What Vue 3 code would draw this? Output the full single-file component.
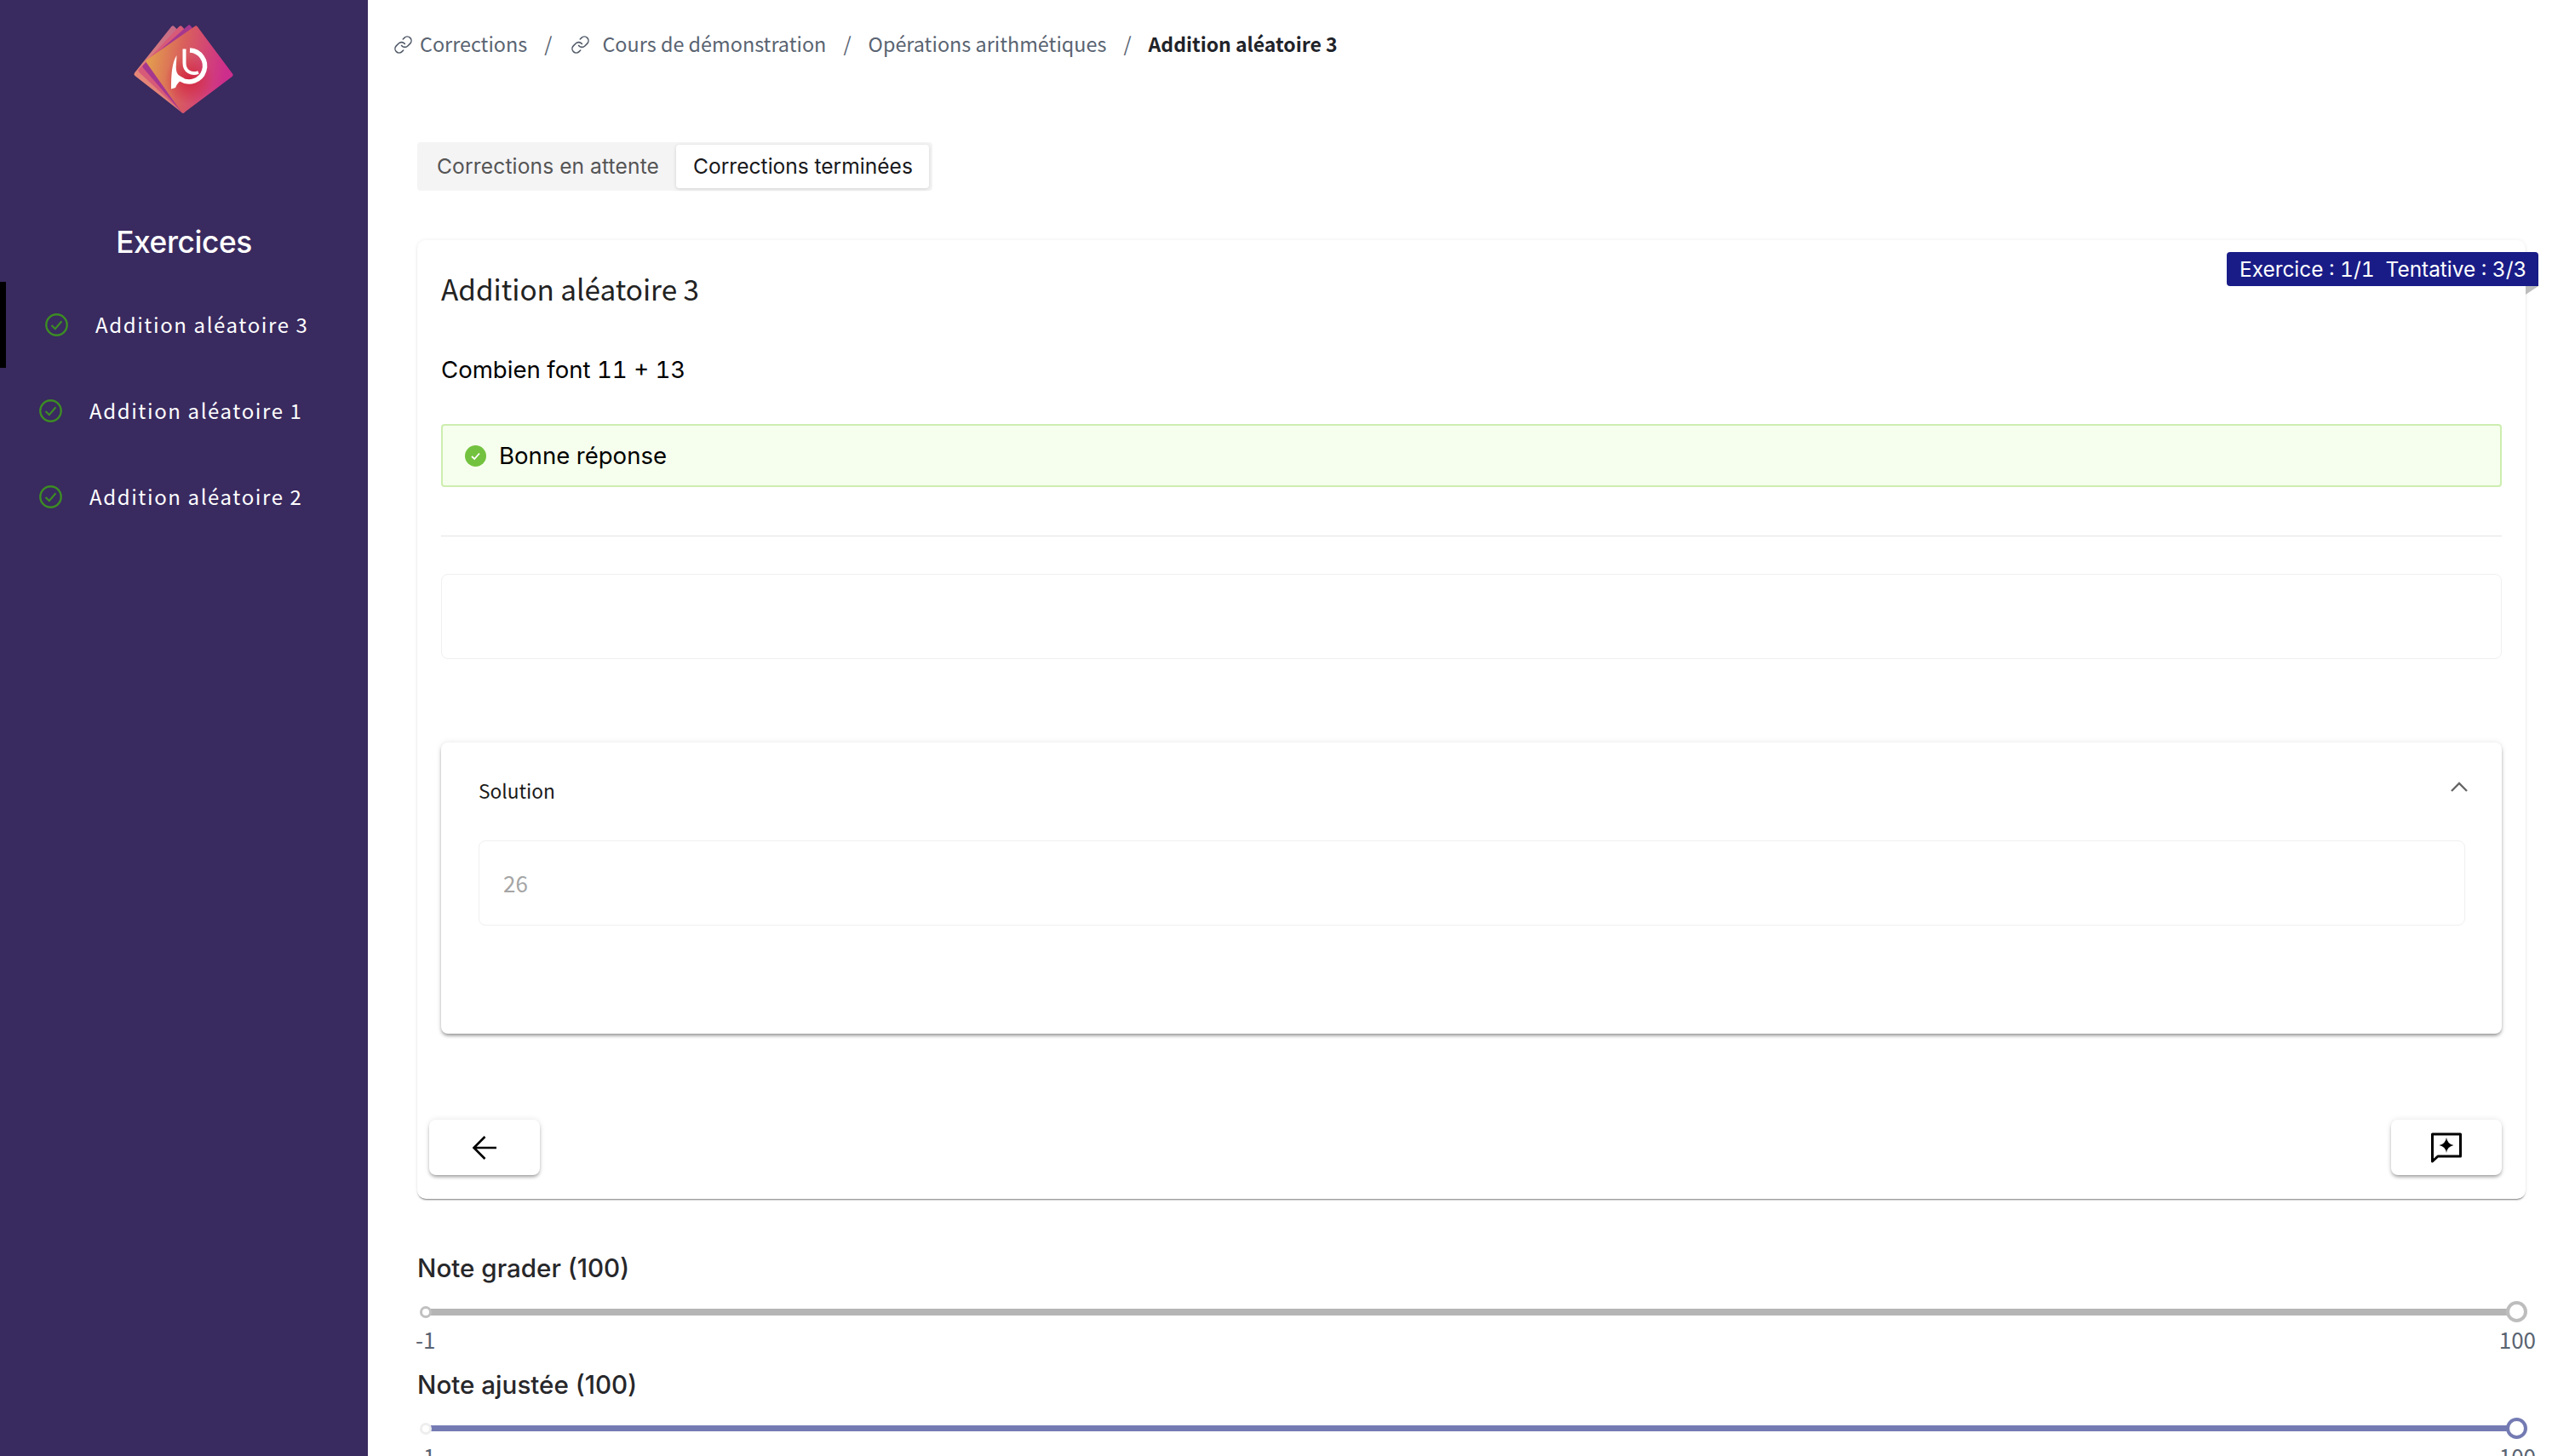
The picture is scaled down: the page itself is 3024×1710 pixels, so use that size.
<script setup>
const items = [
  { label: 'Addition aléatoire 3', active: true },
  { label: 'Addition aléatoire 1', active: false },
  { label: 'Addition aléatoire 2', active: false },
]
const crumbs = [
  { label: 'Corrections', icon: true, cls: 'c1' },
  { label: 'Cours de démonstration', icon: true, cls: 'c2' },
  { label: 'Opérations arithmétiques', icon: false, cls: 'c3' },
]
const sliders = [
  { label: 'Note grader (100)', cls: 'grey' },
  { label: 'Note ajustée (100)', cls: 'blue' },
]
</script>

<template>
  <div class="app">
    <aside class="side">
      <svg class="logo" width="120" height="108" viewBox="156 28 120 108">
        <defs>
          <linearGradient id="lgFront" x1="0" y1="0" x2="1" y2="0.15">
            <stop offset="0" stop-color="#e4a64c" />
            <stop offset="0.45" stop-color="#d9605c" />
            <stop offset="1" stop-color="#cd2d8c" />
          </linearGradient>
          <radialGradient id="lgRed" cx="0.5" cy="0.62" r="0.3">
            <stop offset="0" stop-color="#d2203a" stop-opacity="0.85" />
            <stop offset="1" stop-color="#d2203a" stop-opacity="0" />
          </radialGradient>
          <linearGradient id="lgBack" x1="0" y1="1" x2="1" y2="0">
            <stop offset="0" stop-color="#f39070" />
            <stop offset="1" stop-color="#b8608e" />
          </linearGradient>
        </defs>
        <g stroke-linejoin="round" stroke-width="5">
          <polygon points="203,33 160,87 215,130 240,70" fill="url(#lgBack)" stroke="url(#lgBack)" />
          <polygon points="212,33 165,83 215,130 245,70" fill="#d75a78" stroke="#d75a78" />
          <polygon points="222,32 170,78 215,130 250,70" fill="#a6378f" stroke="#a6378f" />
          <polygon points="230,33 174,72 215,130 271,88" fill="url(#lgFront)" stroke="url(#lgFront)" />
          <polygon points="230,33 174,72 215,130 271,88" fill="url(#lgRed)" stroke="none" />
        </g>
        <path d="M223 59 A18.5 18.5 0 1 1 212 93" fill="none" stroke="#fff" stroke-width="5.5" />
        <path d="M216.5 57.5 V74 C216.5 84 225 88 233 85" fill="none" stroke="#fff" stroke-width="4" />
        <path d="M207.5 65 C202 74 201 86 201 104.5 L206 103 C208 98 211 95 216 92 L211 89 C208 87 206 84 207 74 Z" fill="#fff" />
      </svg>
      <h2 class="side-title">Exercices</h2>
      <nav class="nav">
        <div v-for="item in items" :key="item.label" class="nav-item" :class="{ active: item.active }">
          <svg class="nav-check" width="27" height="27" viewBox="0 0 27 27" fill="none" stroke="#3c8c24">
            <circle cx="13.5" cy="13.5" r="12.2" stroke-width="2.4" />
            <path d="M7.5 14 L11.8 18.2 L19.5 9.2" stroke-width="2.2" />
          </svg>
          <span>{{ item.label }}</span>
        </div>
      </nav>
    </aside>

    <main class="main">
      <div class="crumbs">
        <template v-for="c in crumbs" :key="c.label">
          <svg v-if="c.icon" class="link" width="23" height="23" viewBox="0 0 24 24" fill="none" stroke="#4f5967" stroke-width="1.6" stroke-linecap="round">
            <path d="M10 13a5 5 0 0 0 7.54.54l3-3a5 5 0 0 0-7.07-7.07l-1.72 1.71" />
            <path d="M14 11a5 5 0 0 0-7.54-.54l-3 3a5 5 0 0 0 7.07 7.07l1.71-1.71" />
          </svg>
          <span class="crumb" :class="c.cls">{{ c.label }}</span>
          <span class="sep">/</span>
        </template>
        <span class="crumb current">Addition aléatoire 3</span>
      </div>

      <div class="tabs">
        <div class="tab">Corrections en attente</div>
        <div class="tab on">Corrections terminées</div>
      </div>

      <section class="card">
        <div class="ribbon">Exercice : 1/1&nbsp;&nbsp;Tentative : 3/3</div>
        <h1 class="title">Addition aléatoire 3</h1>
        <p class="question">Combien font 11 + 13</p>
        <div class="alert">
          <svg width="25" height="25" viewBox="0 0 25 25">
            <circle cx="12.5" cy="12.5" r="12.5" fill="#73c23f" />
            <path d="M8 13 L11.2 16 L17 9.5" fill="none" stroke="#fff" stroke-width="1.8" />
          </svg>
          <span>Bonne réponse</span>
        </div>
        <div class="divider"></div>
        <div class="box"></div>
        <div class="solution">
          <div class="sol-head">
            <span>Solution</span>
            <svg width="20" height="12" viewBox="0 0 20 12" fill="none" stroke="#666" stroke-width="2.4">
              <path d="M1 11 L10 2 L19 11" />
            </svg>
          </div>
          <div class="sol-box">26</div>
        </div>
        <div class="actions">
          <button class="btn back" type="button">
            <svg width="30" height="30" viewBox="0 0 30 30" fill="none" stroke="#000" stroke-width="2.6">
              <path d="M29 15 H3 M15.5 2 L2.5 15 L15.5 28" />
            </svg>
          </button>
          <button class="btn" type="button">
            <svg width="36" height="36" viewBox="0 0 36 36">
              <path d="M1.5 2 H34.5 V28 H8 L1.5 34 Z" fill="none" stroke="#000" stroke-width="3" stroke-linejoin="round" />
              <path d="M18 6 Q19 13.5 26.5 15 Q19 16.5 18 24 Q17 16.5 9.5 15 Q17 13.5 18 6 Z" fill="#000" />
            </svg>
          </button>
        </div>
      </section>

      <div v-for="s in sliders" :key="s.label" class="grade" :class="s.cls">
        <div class="grade-label">{{ s.label }}</div>
        <div class="slider">
          <div class="track"></div>
          <div class="thumb min"></div>
          <div class="thumb max"></div>
        </div>
        <div class="ticks"><span>-1</span><span>100</span></div>
      </div>
    </main>
  </div>
</template>

<style>
html, body {
  margin: 0;
  height: 100%;
  overflow: hidden;
  background: #fff;
}
</style>

<style scoped>
.app {
  display: flex;
  height: 1710px;
  overflow: hidden;
  font-family: Inter, "Liberation Sans", sans-serif;
  font-variant-numeric: tabular-nums;
}
.side {
  width: 432px;
  flex: none;
  background: #392a5f;
  display: flex;
  flex-direction: column;
  align-items: center;
}
.logo {
  display: block;
  margin-top: 28px;
}
.side-title {
  margin: 119px 0 0;
  height: 60px;
  line-height: 60px;
  color: #fff;
  font-size: 35.3px;
  font-weight: 500;
  letter-spacing: -0.4px;
}
.nav {
  align-self: stretch;
  margin-top: 16px;
}
.nav-item {
  height: 101px;
  display: flex;
  align-items: center;
  padding-left: 46px;
  gap: 32px;
  color: #fff;
  font-family: "Noto Sans CJK SC", "Noto Sans", sans-serif;
  font-size: 24px;
  letter-spacing: 1.6px;
  box-sizing: border-box;
}
.nav-item.active {
  border-left: 7px solid #000;
}
.nav-item span {
  margin-top: -2px;
}
.nav-check { flex: none; }

.main {
  flex: 1;
  min-width: 0;
  padding: 0 58px;
}
.crumbs {
  height: 102px;
  margin-left: -28px;
  display: flex;
  align-items: center;
  font-family: "Noto Sans CJK SC", "Noto Sans", sans-serif;
  font-size: 23.4px;
  line-height: 32px;
  color: #5a6472;
}
.link { flex: none; margin: 2px 8px 0 0; }
.link:not(:first-child) { margin-left: 2px; }
.crumb.c2 { margin-left: 6px; }
.sep { margin: 0 20px; }
.crumb.current {
  color: #1f2329;
  font-size: 23px;
  font-weight: 700;
}
.tabs {
  margin-top: 65px;
  width: 605px;
  height: 57px;
  box-sizing: border-box;
  padding: 3px 4px 3px 0;
  display: flex;
  justify-content: space-between;
  background: #f4f4f5;
  border-radius: 4px;
  font-size: 24.6px;
}
.tab {
  line-height: 51px;
  padding-left: 23px;
  color: #555;
  letter-spacing: 0.14px;
}
.tab.on {
  width: 297px;
  box-sizing: border-box;
  padding-left: 20px;
  color: #18181b;
  letter-spacing: 0;
  background: #fff;
  border-radius: 4px;
  box-shadow: 0 1px 4px rgba(0, 0, 0, 0.14);
}
.card {
  position: relative;
  margin-top: 58px;
  height: 1126px;
  box-sizing: border-box;
  padding: 35px 28px 0;
  background: #fff;
  border-radius: 10px;
  box-shadow: 0 2px 2px -1px rgba(0, 0, 0, 0.5), 0 0 5px rgba(0, 0, 0, 0.07);
}
.ribbon {
  position: absolute;
  top: 14px;
  right: -15px;
  height: 40px;
  line-height: 40px;
  padding: 0 15px;
  box-sizing: border-box;
  width: 366px;
  white-space: nowrap;
  background: #191c87;
  color: #fff;
  font-size: 24.4px;
  border-radius: 4px 4px 0 4px;
}
.ribbon::after {
  content: "";
  position: absolute;
  left: 351px;
  top: 40px;
  border-top: 10px solid #bdbdbd;
  border-right: 15px solid transparent;
}
.title {
  margin: 0;
  height: 44px;
  line-height: 44px;
  font-family: "Noto Sans CJK SC", "Noto Sans", sans-serif;
  font-size: 33.3px;
  font-weight: 400;
  color: #222;
}
.question {
  margin: 53px 0 0;
  height: 40px;
  line-height: 40px;
  font-size: 27.6px;
  color: #000;
}
.alert {
  margin-top: 44px;
  height: 74px;
  box-sizing: border-box;
  display: flex;
  align-items: center;
  gap: 15px;
  padding-left: 26px;
  background: #f6ffed;
  border: 2px solid #cdeeb0;
  border-radius: 4px;
  font-size: 27.6px;
  color: #000;
}
.divider {
  margin-top: 57px;
  height: 1px;
  background: #e4e4e4;
}
.box {
  margin-top: 44px;
  height: 100px;
  box-sizing: border-box;
  border: 1.5px solid #f0f0f0;
  border-radius: 8px;
}
.solution {
  margin-top: 98px;
  height: 342px;
  box-sizing: border-box;
  padding: 0 43px 0 44px;
  border-radius: 8px;
  box-shadow: 0 3px 4px -1px rgba(0, 0, 0, 0.42), 0 0 7px rgba(0, 0, 0, 0.1);
}
.sol-head {
  height: 115px;
  display: flex;
  align-items: center;
  justify-content: space-between;
  font-family: "Noto Sans CJK SC", "Noto Sans", sans-serif;
  font-size: 22.7px;
  color: #1a1a1a;
}
.sol-head span {
  margin-top: -2px;
}
.sol-head svg {
  margin: -12px -3px 0 0;
}
.sol-box {
  height: 100px;
  line-height: 97px;
  box-sizing: border-box;
  border: 1.5px solid #f0f0f0;
  border-radius: 8px;
  padding-left: 28px;
  font-family: "Noto Sans CJK SC", "Noto Sans", sans-serif;
  font-size: 26px;
  color: #a5a5a5;
}
.actions {
  margin-top: 101px;
  display: flex;
  justify-content: space-between;
}
.btn {
  width: 130px;
  height: 65px;
  padding: 0;
  border: 0;
  display: flex;
  align-items: center;
  justify-content: center;
  background: #fff;
  border-radius: 8px;
  box-shadow: 0 3px 4px -1px rgba(0, 0, 0, 0.36), 0 0 7px rgba(0, 0, 0, 0.1);
}
.btn.back {
  margin-left: -14px;
}
.grade-label {
  margin-top: 16px;
  height: 40px;
  line-height: 40px;
  font-size: 29.6px;
  font-weight: 500;
  color: #27272a;
  font-variant-numeric: normal;
}
.card + .grade .grade-label {
  margin-top: 61px;
}
.slider {
  position: relative;
  height: 26px;
  margin-top: 19px;
}
.track {
  position: absolute;
  left: 15px;
  right: 10px;
  top: 9px;
  height: 8px;
}
.thumb {
  position: absolute;
  box-sizing: border-box;
  border-radius: 50%;
  background: #fff;
}
.thumb.min {
  left: 3px;
  top: 6px;
  width: 14px;
  height: 14px;
  border: 3px solid #c0c0c0;
}
.thumb.max {
  right: -2px;
  top: 0;
  width: 25px;
  height: 25px;
  border: 4px solid #bdbdbd;
}
.grey .track { background: #b5b5b5; }
.blue .track { background: #747bb3; height: 7px; }
.blue .thumb.min { border-color: #eeeeee; }
.blue .thumb.max { border-color: #747bb3; }
.ticks {
  margin: 4px -12px 0 -2px;
  height: 30px;
  line-height: 30px;
  display: flex;
  justify-content: space-between;
  font-family: "Noto Sans CJK SC", "Noto Sans", sans-serif;
  font-size: 26px;
  color: #5a6472;
}
.grade + .grade .grade-label {
  margin-top: 18px;
}
</style>
